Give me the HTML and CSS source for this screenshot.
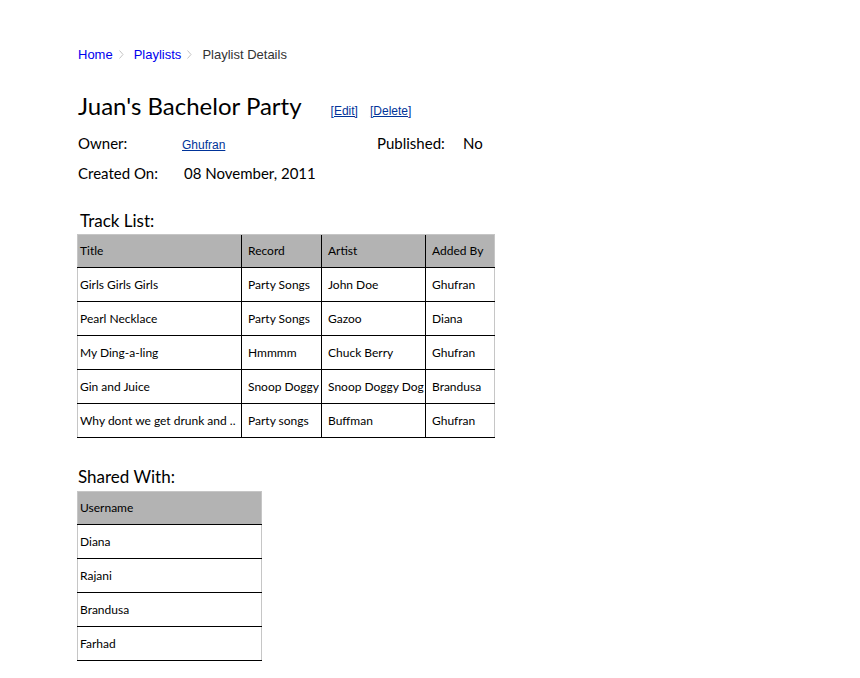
FILE: index.html
```html
<!DOCTYPE html>
<html>
<head>
<meta charset="utf-8">
<link rel="stylesheet" href="styles.css">
</head>
<body>
<div class="page">
  <nav class="crumbs">
    <a class="crumb" href="#">Home</a>
    <svg class="sep" width="5" height="9" viewBox="0 0 5 9"><path d="M0.5 0.5 L4 4.5 L0.5 8.5" fill="none" stroke="#c4c4c4" stroke-width="1"/></svg>
    <a class="crumb" href="#">Playlists</a>
    <svg class="sep" width="5" height="9" viewBox="0 0 5 9"><path d="M0.5 0.5 L4 4.5 L0.5 8.5" fill="none" stroke="#c4c4c4" stroke-width="1"/></svg>
    <span class="crumb current">Playlist Details</span>
  </nav>

  <div class="title-row">
    <h1 class="title">Juan's Bachelor Party</h1>
    <a class="action" href="#">[Edit]</a>
    <a class="action" href="#">[Delete]</a>
  </div>

  <div class="meta">
    <span class="label">Owner:</span>
    <span class="value"><a class="link" href="#">Ghufran</a></span>
    <span class="label">Published:</span>
    <span class="value">No</span>
    <span class="label">Created On:</span>
    <span class="value date">08 November, 2011</span>
  </div>

  <h2 class="section track-head">Track List:</h2>
  <table class="grid tracks">
    <colgroup>
      <col class="c1"><col class="c2"><col class="c3"><col class="c4">
    </colgroup>
    <thead>
      <tr><th>Title</th><th>Record</th><th>Artist</th><th>Added By</th></tr>
    </thead>
    <tbody>
      <tr><td>Girls Girls Girls</td><td>Party Songs</td><td>John Doe</td><td>Ghufran</td></tr>
      <tr><td>Pearl Necklace</td><td>Party Songs</td><td>Gazoo</td><td>Diana</td></tr>
      <tr><td>My Ding-a-ling</td><td>Hmmmm</td><td>Chuck Berry</td><td>Ghufran</td></tr>
      <tr><td>Gin and Juice</td><td>Snoop Doggy</td><td>Snoop Doggy Dog</td><td>Brandusa</td></tr>
      <tr><td>Why dont we get drunk and ..</td><td>Party songs</td><td>Buffman</td><td>Ghufran</td></tr>
    </tbody>
  </table>

  <h2 class="section shared-head">Shared With:</h2>
  <table class="grid shared">
    <thead><tr><th>Username</th></tr></thead>
    <tbody>
      <tr><td>Diana</td></tr>
      <tr><td>Rajani</td></tr>
      <tr><td>Brandusa</td></tr>
      <tr><td>Farhad</td></tr>
    </tbody>
  </table>
</div>
</body>
</html>
```

FILE: styles.css
```css
html, body {
  margin: 0;
  padding: 0;
  background: #ffffff;
}

.page {
  padding: 46px 0 0 78px;
  font-family: Lato, "DejaVu Sans", sans-serif;
  color: #000;
}

.crumbs {
  display: flex;
  align-items: center;
  height: 16px;
  font-family: "Liberation Sans", Arial, sans-serif;
  font-size: 13px;
}

.crumb {
  color: #0000ee;
  text-decoration: none;
}

.crumb.current {
  color: #333333;
}

.sep {
  display: block;
  margin: 0 10px 0 6px;
}

.title-row {
  display: flex;
  align-items: baseline;
  margin-top: 30px;
  height: 28px;
}

.title {
  margin: 0 29px 0 0;
  font-size: 24px;
  font-weight: normal;
  line-height: 28px;
}

.action {
  font-family: "Liberation Sans", Arial, sans-serif;
  font-size: 12px;
  color: #003399;
  margin-right: 12px;
}

.meta {
  display: grid;
  grid-template-columns: 104px 195px 86px auto;
  grid-auto-rows: 30px;
  align-items: center;
  margin-top: 8px;
  font-size: 15px;
}

.link {
  font-family: "Liberation Sans", Arial, sans-serif;
  font-size: 12px;
  color: #003399;
}

.date {
  padding-left: 2px;
}

.section {
  font-size: 17px;
  font-weight: normal;
  margin: 0;
  line-height: 20px;
}

.track-head {
  margin-top: 23px;
  padding-left: 2px;
}

.shared-head {
  margin-top: 29px;
}

.grid {
  border-collapse: collapse;
  table-layout: fixed;
  font-size: 12px;
  margin: 3px 0 0 -1px;
}

.grid th,
.grid td {
  height: 32px;
  padding: 0 0 1px 6px;
  text-align: left;
  font-weight: normal;
  white-space: nowrap;
  overflow: hidden;
  border-bottom: 1px solid #000;
  border-left: 1px solid #000;
}

.grid th {
  height: 30px;
  padding-bottom: 2px;
  background: #b3b3b3;
  border-top: 1px solid #c6c6c6;
}

.grid th:first-child,
.grid td:first-child {
  padding-left: 2px;
  border-left: 1px solid #c6c6c6;
}

.grid th:last-child,
.grid td:last-child {
  border-right: 1px solid #c6c6c6;
}

.tracks {
  width: 417px;
}

.tracks .c1 { width: 164px; }
.tracks .c2 { width: 80px; }
.tracks .c3 { width: 104px; }
.tracks .c4 { width: 69px; }

.shared {
  width: 185px;
  margin-top: 4px;
}
```
